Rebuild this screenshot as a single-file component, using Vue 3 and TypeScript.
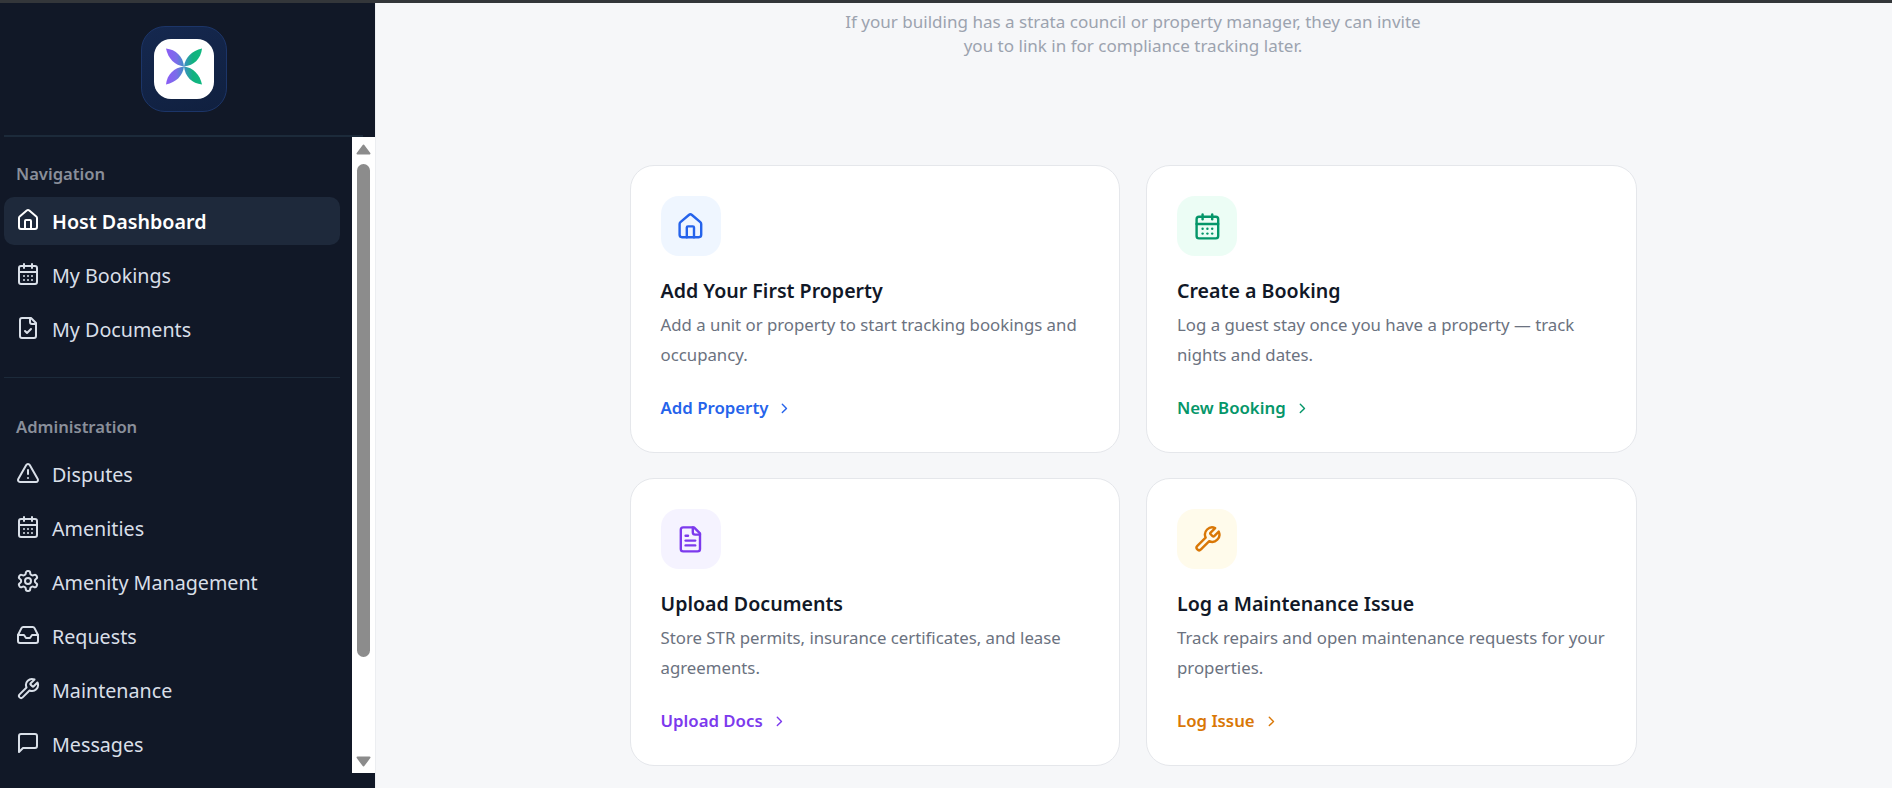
<script setup lang="ts">
const icons: Record<string, string[]> = {
  home: [
    'M15 21v-8a1 1 0 0 0-1-1h-4a1 1 0 0 0-1 1v8',
    'M3 10a2 2 0 0 1 .709-1.528l7-5.999a2 2 0 0 1 2.582 0l7 5.999A2 2 0 0 1 21 10v9a2 2 0 0 1-2 2H5a2 2 0 0 1-2-2z',
  ],
  calendar: [
    'M8 2v4',
    'M16 2v4',
    'M5 4h14a2 2 0 0 1 2 2v14a2 2 0 0 1-2 2H5a2 2 0 0 1-2-2V6a2 2 0 0 1 2-2z',
    'M3 10h18',
    'M8 14h.01',
    'M12 14h.01',
    'M16 14h.01',
    'M8 18h.01',
    'M12 18h.01',
    'M16 18h.01',
  ],
  fileCheck: [
    'M15 2H6a2 2 0 0 0-2 2v16a2 2 0 0 0 2 2h12a2 2 0 0 0 2-2V7Z',
    'M14 2v4a2 2 0 0 0 2 2h4',
    'm9 15 2 2 4-4',
  ],
  fileText: [
    'M15 2H6a2 2 0 0 0-2 2v16a2 2 0 0 0 2 2h12a2 2 0 0 0 2-2V7Z',
    'M14 2v4a2 2 0 0 0 2 2h4',
    'M10 9H8',
    'M16 13H8',
    'M16 17H8',
  ],
  alert: ['m21.73 18-8-14a2 2 0 0 0-3.48 0l-8 14A2 2 0 0 0 4 21h16a2 2 0 0 0 1.73-3', 'M12 9v4', 'M12 17h.01'],
  gear: [
    'M12.22 2h-.44a2 2 0 0 0-2 2v.18a2 2 0 0 1-1 1.73l-.43.25a2 2 0 0 1-2 0l-.15-.08a2 2 0 0 0-2.73.73l-.22.38a2 2 0 0 0 .73 2.73l.15.1a2 2 0 0 1 1 1.72v.51a2 2 0 0 1-1 1.74l-.15.09a2 2 0 0 0-.73 2.73l.22.38a2 2 0 0 0 2.73.73l.15-.08a2 2 0 0 1 2 0l.43.25a2 2 0 0 1 1 1.73V20a2 2 0 0 0 2 2h.44a2 2 0 0 0 2-2v-.18a2 2 0 0 1 1-1.73l.43-.25a2 2 0 0 1 2 0l.15.08a2 2 0 0 0 2.73-.73l.22-.39a2 2 0 0 0-.73-2.73l-.15-.08a2 2 0 0 1-1-1.74v-.5a2 2 0 0 1 1-1.74l.15-.09a2 2 0 0 0 .73-2.73l-.22-.38a2 2 0 0 0-2.73-.73l-.15.08a2 2 0 0 1-2 0l-.43-.25a2 2 0 0 1-1-1.73V4a2 2 0 0 0-2-2z',
    'M15 12a3 3 0 1 1-6 0 3 3 0 0 1 6 0z',
  ],
  inbox: [
    'M22 12h-6l-2 3h-4l-2-3H2',
    'M5.45 5.11 2 12v6a2 2 0 0 0 2 2h16a2 2 0 0 0 2-2v-6l-3.45-6.89A2 2 0 0 0 16.76 4H7.24a2 2 0 0 0-1.79 1.11z',
  ],
  wrench: [
    'M14.7 6.3a1 1 0 0 0 0 1.4l1.6 1.6a1 1 0 0 0 1.4 0l3.77-3.77a6 6 0 0 1-7.94 7.94l-6.91 6.91a2.12 2.12 0 0 1-3-3l6.91-6.91a6 6 0 0 1 7.94-7.94l-3.76 3.76z',
  ],
  message: ['M21 15a2 2 0 0 1-2 2H7l-4 4V5a2 2 0 0 1 2-2h14a2 2 0 0 1 2 2z'],
}

const petals = [
  'M0 0C1-9 8-16 18-18C17-8 10-1 0 0Z',
  'M0 0C9 1 16 8 18 18C8 17 1 10 0 0Z',
  'M0 0C-1 9-8 16-18 18C-17 8-10 1 0 0Z',
  'M0 0C-9-1-16-8-18-18C-8-17-1-10 0 0Z',
]

const mainNav = [
  { label: 'Host Dashboard', icon: 'home', active: true },
  { label: 'My Bookings', icon: 'calendar' },
  { label: 'My Documents', icon: 'fileCheck' },
]

const adminNav = [
  { label: 'Disputes', icon: 'alert' },
  { label: 'Amenities', icon: 'calendar' },
  { label: 'Amenity Management', icon: 'gear' },
  { label: 'Requests', icon: 'inbox' },
  { label: 'Maintenance', icon: 'wrench' },
  { label: 'Messages', icon: 'message' },
]

const cards = [
  {
    title: 'Add Your First Property',
    text: 'Add a unit or property to start tracking bookings and occupancy.',
    link: 'Add Property',
    icon: 'home',
    tone: 'blue',
  },
  {
    title: 'Create a Booking',
    text: 'Log a guest stay once you have a property — track nights and dates.',
    link: 'New Booking',
    icon: 'calendar',
    tone: 'green',
  },
  {
    title: 'Upload Documents',
    text: 'Store STR permits, insurance certificates, and lease agreements.',
    link: 'Upload Docs',
    icon: 'fileText',
    tone: 'purple',
  },
  {
    title: 'Log a Maintenance Issue',
    text: 'Track repairs and open maintenance requests for your properties.',
    link: 'Log Issue',
    icon: 'wrench',
    tone: 'amber',
  },
]
</script>

<template>
  <div class="window">
    <div class="top-strip"></div>
    <div class="shell">
      <aside class="sidebar">
        <div class="brand">
          <div class="logo-tile">
            <div class="logo-inner">
              <svg viewBox="0 0 60 60" width="60" height="60">
                <defs>
                  <linearGradient id="petal" gradientUnits="userSpaceOnUse" x1="-18" y1="0" x2="18" y2="0">
                    <stop offset="0" stop-color="#8b5cf6" />
                    <stop offset="0.3" stop-color="#7a6ee8" />
                    <stop offset="0.5" stop-color="#3f8fc4" />
                    <stop offset="0.75" stop-color="#10b27e" />
                    <stop offset="1" stop-color="#10b981" />
                  </linearGradient>
                </defs>
                <g transform="translate(30 27.5)">
                  <path v-for="d in petals" :key="d" class="petal" :d="d" />
                </g>
              </svg>
            </div>
          </div>
        </div>

        <div class="nav-row">
          <nav class="nav">
            <div class="nav-label">Navigation</div>
            <a v-for="item in mainNav" :key="item.label" class="nav-item" :class="{ active: item.active }">
              <svg class="nav-icon" viewBox="0 0 24 24">
                <path v-for="d in icons[item.icon]" :key="d" :d="d" />
              </svg>
              <span>{{ item.label }}</span>
            </a>
            <div class="nav-divider"></div>
            <div class="nav-label">Administration</div>
            <a v-for="item in adminNav" :key="item.label" class="nav-item">
              <svg class="nav-icon" viewBox="0 0 24 24">
                <path v-for="d in icons[item.icon]" :key="d" :d="d" />
              </svg>
              <span>{{ item.label }}</span>
            </a>
          </nav>
          <div class="scrollbar">
            <svg class="arrow" viewBox="0 0 15 11"><path d="M7.5 1.5 13.5 9.5H1.5Z" /></svg>
            <span class="thumb"></span>
            <svg class="arrow down" viewBox="0 0 15 11"><path d="M7.5 9.5 13.5 1.5H1.5Z" /></svg>
          </div>
        </div>
      </aside>

      <main class="main">
        <p class="hint">If your building has a strata council or property manager, they can invite you to link in for compliance tracking later.</p>
        <section class="cards">
          <article v-for="card in cards" :key="card.title" class="card" :class="card.tone">
            <div class="card-icon">
              <svg viewBox="0 0 24 24">
                <path v-for="d in icons[card.icon]" :key="d" :d="d" />
              </svg>
            </div>
            <h3>{{ card.title }}</h3>
            <p>{{ card.text }}</p>
            <a class="card-link">
              {{ card.link }}
              <svg viewBox="0 0 24 24"><path d="m9 18 6-6-6-6" /></svg>
            </a>
          </article>
        </section>
      </main>
    </div>
  </div>
</template>

<style scoped>
.window {
  height: 788px;
  display: flex;
  flex-direction: column;
  overflow: hidden;
  font-family: "Noto Sans", Inter, sans-serif;
}

.top-strip {
  height: 3px;
  background: #33363a;
  flex: none;
}

.shell {
  flex: 1;
  display: flex;
  min-height: 0;
}

svg path {
  fill: none;
  stroke: currentColor;
  stroke-width: 2;
  stroke-linecap: round;
  stroke-linejoin: round;
}

.sidebar {
  width: 375px;
  flex: none;
  display: flex;
  flex-direction: column;
  background: #111827;
}

.brand {
  height: 109px;
  margin: 0 12px 0 4px;
  padding: 23px 0 0;
  border-bottom: 2px solid #1c2a3a;
  display: flex;
  justify-content: center;
}

.logo-tile {
  width: 86px;
  height: 86px;
  box-sizing: border-box;
  border: 1px solid #1c3568;
  border-radius: 24px;
  background: linear-gradient(160deg, #15284f, #10203f);
  display: flex;
  align-items: center;
  justify-content: center;
}

.logo-inner {
  width: 60px;
  height: 60px;
  border-radius: 17px;
  background: #fff;
}

.logo-inner svg {
  display: block;
}

svg path.petal {
  fill: url(#petal);
  stroke: none;
}

.nav-row {
  flex: 1;
  min-height: 0;
  display: flex;
  margin-bottom: 15px;
}

.nav {
  flex: none;
  width: 336px;
  margin: 0 12px 0 4px;
  padding-top: 27px;
  overflow: hidden;
}

.nav-label {
  height: 20px;
  line-height: 20px;
  padding-left: 12px;
  margin-bottom: 13px;
  font-size: 16.6px;
  font-weight: 600;
  color: #8a8f9a;
}

.nav-item {
  height: 48px;
  display: flex;
  align-items: center;
  gap: 12px;
  padding-left: 12px;
  margin-bottom: 6px;
  border-radius: 10px;
  font-size: 19.7px;
  color: #d9dfe8;
}

.nav-item span {
  margin-top: 1px;
}

.nav-item.active {
  background: #1e293b;
  color: #fff;
  font-weight: 600;
}

.nav-icon {
  width: 24px;
  height: 24px;
  flex: none;
  margin-top: -3px;
}

.nav-divider {
  height: 1px;
  background: #1c2a3a;
  margin: 24px 0 39px;
}

.scrollbar {
  width: 23px;
  flex: none;
  background: #fff;
  color: #8c8c8c;
  display: flex;
  flex-direction: column;
  align-items: center;
  padding: 7px 0 6px;
  box-sizing: border-box;
}

.arrow {
  width: 15px;
  height: 11px;
  flex: none;
}

.arrow path {
  fill: currentColor;
}

.arrow.down {
  margin-top: auto;
}

.thumb {
  width: 13px;
  height: 493px;
  margin-top: 9px;
  border-radius: 7px;
  background: #8c8c8c;
  flex: none;
}

.main {
  flex: 1;
  min-width: 0;
  box-sizing: border-box;
  padding-right: 2px;
  background: #f6f7f9;
  border-left: 1px solid #eceef1;
}

.hint {
  width: 576px;
  margin: 7px auto 0;
  text-align: center;
  font-size: 17.05px;
  line-height: 24px;
  color: #9ca3af;
}

.cards {
  width: 1007px;
  margin: 107px auto 0;
  display: grid;
  grid-template-columns: 490.5px 490.5px;
  column-gap: 26px;
  row-gap: 25px;
}

.card {
  height: 288px;
  box-sizing: border-box;
  padding: 30px 25px 30px 30px;
  background: #fff;
  border: 1px solid #e5e7eb;
  border-radius: 24px;
}

.card-icon {
  width: 60px;
  height: 60px;
  border-radius: 18px;
  display: flex;
  align-items: center;
  justify-content: center;
}

.card-icon svg {
  width: 28.8px;
  height: 28.8px;
}

.card h3 {
  margin: 23px 0 0;
  font-size: 19.6px;
  line-height: 24px;
  font-weight: 600;
  color: #111827;
}

.card p {
  margin: 7px 0 0;
  font-size: 16.8px;
  line-height: 30px;
  color: #6b7280;
}

.card-link {
  display: inline-flex;
  align-items: center;
  gap: 8px;
  margin-top: 26px;
  font-size: 16.8px;
  font-weight: 600;
  line-height: 24px;
}

.card-link svg {
  width: 16.8px;
  height: 16.8px;
}

.blue .card-icon { background: #eff6ff; color: #2563eb; }
.blue .card-link { color: #2563eb; }
.green .card-icon { background: #ecfdf5; color: #059669; }
.green .card-link { color: #059669; }
.purple .card-icon { background: #f5f3ff; color: #7c3aed; }
.purple .card-link { color: #7c3aed; }
.amber .card-icon { background: #fffbeb; color: #d97706; }
.amber .card-link { color: #d97706; }
</style>

<style>
html,
body {
  margin: 0;
  overflow: hidden;
}
</style>
